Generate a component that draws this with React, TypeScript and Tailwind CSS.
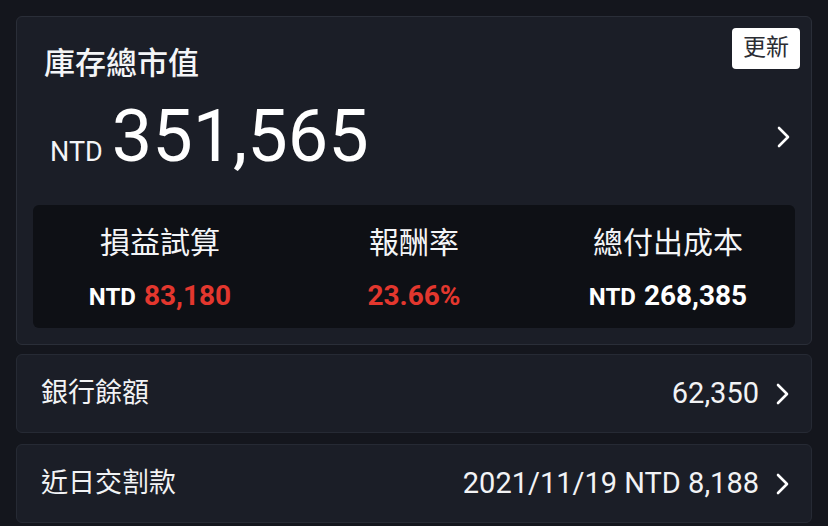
const font = { fontFamily: 'Roboto, "Noto Sans CJK TC", sans-serif' };

type Stat = { label: string; value: string; prefix?: string; red?: boolean };

const stats: Stat[] = [
  { label: '損益試算', prefix: 'NTD', value: '83,180', red: true },
  { label: '報酬率', value: '23.66%', red: true },
  { label: '總付出成本', prefix: 'NTD', value: '268,385' },
];

function Chevron() {
  return (
    <svg width="13" height="22" viewBox="0 0 13 22" fill="none" className="shrink-0">
      <polyline points="2,2 11,11 2,20" stroke="white" strokeWidth="2.6" strokeLinecap="round" strokeLinejoin="round" />
    </svg>
  );
}

function Row({ label, value }: { label: string; value: string }) {
  return (
    <div className="flex h-[79px] items-center justify-between rounded-md border border-[#262a34] bg-[#1b1e27] pl-6 pr-[22px]">
      <span className="text-[27px] text-[#f2f3f5]">{label}</span>
      <div className="flex items-center gap-[17px]">
        <span className="text-[29px] text-[#f2f3f5]">{value}</span>
        <Chevron />
      </div>
    </div>
  );
}

export default function App() {
  return (
    <div className="min-h-[526px] bg-[#14161d] px-4 pt-4" style={font}>
      <section className="relative rounded-md border border-[#2a2e38] bg-[#1b1e27] p-4">
        <button className="absolute right-[11px] top-[11px] h-[41px] rounded bg-white px-[11px] text-[23px] text-[#2b2d33]">
          更新
        </button>

        <div className="pl-[11px] pt-[12px]">
          <h2 className="text-[31px] font-medium leading-[38px] text-[#f4f5f7]">庫存總市值</h2>
          <div className="mt-[16px] flex items-center justify-between pr-[5px]">
            <div className="flex items-baseline gap-[9px]">
              <span className="pl-[6px] text-[27px] text-[#f4f5f7]">NTD</span>
              <span className="text-[72px] leading-[76px] text-white">351,565</span>
            </div>
            <Chevron />
          </div>
        </div>

        <div className="mt-[30px] grid h-[123px] grid-cols-3 rounded-md bg-[#0e1015] pt-[18px]">
          {stats.map((s) => (
            <div key={s.label} className="flex flex-col items-center">
              <span className="text-[30px] leading-[40px] text-[#f4f5f7]">{s.label}</span>
              <span className="mt-[16px] text-[28px] font-bold leading-[34px]">
                {s.prefix && <span className="mr-[8px] text-[24px] text-white">{s.prefix}</span>}
                <span className={s.red ? 'text-[#e3372e]' : 'text-white'}>{s.value}</span>
              </span>
            </div>
          ))}
        </div>
      </section>

      <div className="mt-[9px] flex flex-col gap-[11px]">
        <Row label="銀行餘額" value="62,350" />
        <Row label="近日交割款" value="2021/11/19 NTD 8,188" />
      </div>
    </div>
  );
}
